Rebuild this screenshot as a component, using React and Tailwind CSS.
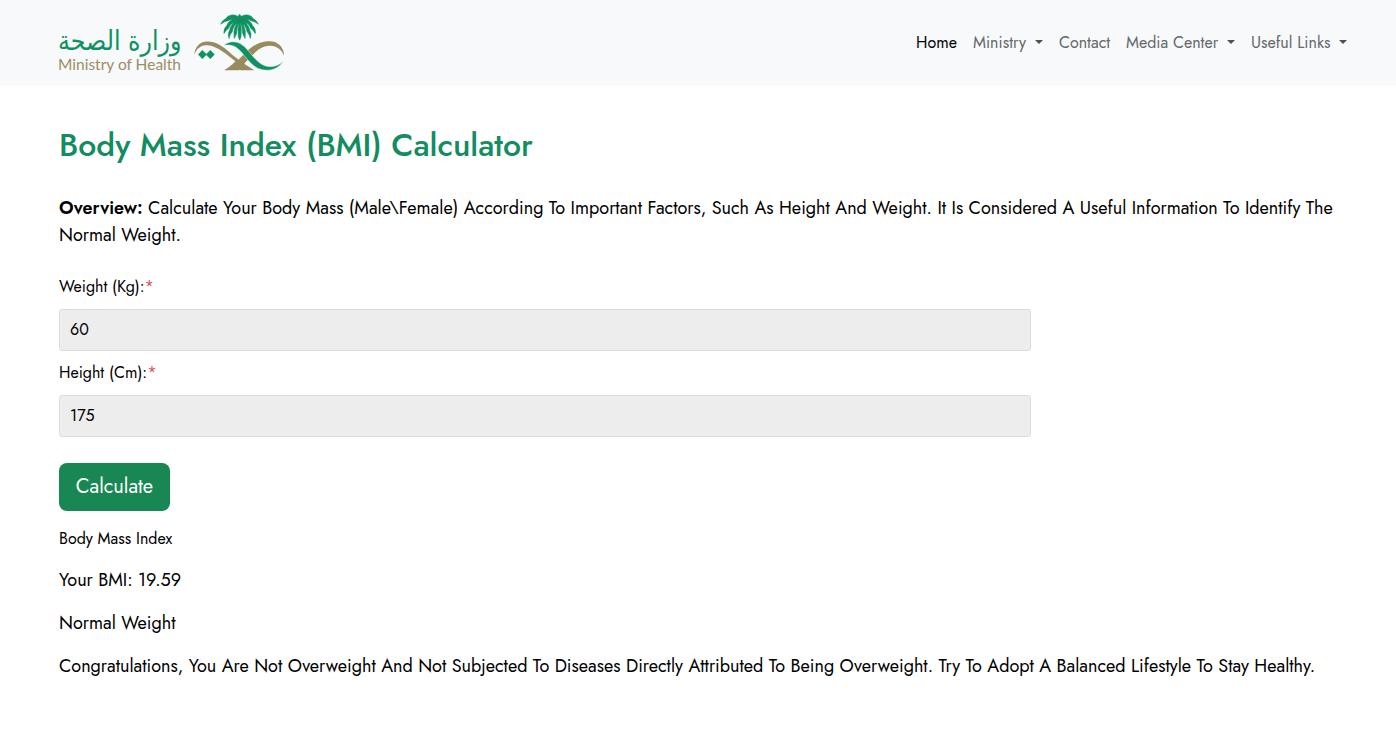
import React from "react";

function Logo() {
  return (
    <svg width="230" height="76" viewBox="58 5 230 76" role="img" aria-label="Ministry of Health">
      <text x="58" y="50" direction="ltr" textLength="123.5" lengthAdjust="spacingAndGlyphs" fontFamily="'DejaVu Sans', sans-serif" fontSize="27" fill="#0f9162">وزارة الصحة</text>
      <text x="58" y="69.5" textLength="123" lengthAdjust="spacingAndGlyphs" fontFamily="Lato, sans-serif" fontSize="15.8" fill="#9b8e62">Ministry of Health</text>
      <g transform="translate(185 5.5) scale(.33333)">
        <g fill="#988b60">
          <path d="M28 148C29 126 43 108 67 108C93 108 112 121 135 142C163 167 187 181 208 194H167L148 178L121 194H118C136 182 148 172 151 167C127 148 98 121 67 119C48 118 35 128 28 148Z" />
          <path d="M119 194C154 176 173 146 202 124C222 110 237 107 254 107C280 107 298 127 297 151C290 132 276 122 256 121C232 120 215 136 202 149C187 164 177 174 163 194Z" />
        </g>
        <path fill="#0f9162" stroke="#f8f9fa" strokeWidth="1.5" d="M117 120C130 107 150 105 169 116C190 129 203 159 230 176C251 189 278 184 295 167C281 190 255 199 229 192C194 183 180 145 155 127C144 119 132 117 117 120Z" />
        <path fill="#0f9162" stroke="#0f9162" strokeWidth="1.5" d="M40 147L52 134L64 146L76 134L88 147L76 160L64 148L52 160Z" />
        <g fill="#0f9162" stroke="#0f9162" strokeWidth="1.8" transform="translate(0 2)">
          <path d="M164 38L169 70L168 92L164 102L160 92L159 70Z" />
          <path d="M164 24L169 31C184 22 199 27 204 37Q215 42 220 54Q208 45 198 44C186 37 176 40 169 48H158C151 40 141 37 129 44Q119 45 107 54Q112 42 123 37C129 27 144 22 159 31Z" />
          <path d="M160 37C142 36 129 47 125 59Q115 67 117 82Q123 71 131 66C136 53 147 46 160 47Z" />
          <path d="M168 37C186 36 199 47 203 59Q213 67 211 82Q205 71 197 66C192 53 181 46 168 47Z" />
          <path d="M162 40C146 46 136 59 134 72Q127 83 132 97Q135 84 142 76C144 62 151 53 162 48Z" />
          <path d="M166 40C182 46 192 59 194 72Q201 83 196 97Q193 84 186 76C184 62 177 53 166 48Z" />
          <path d="M162 42C151 56 146 70 147 82L148 97L155 82C155 69 158 57 163 49Z" />
          <path d="M166 42C177 56 182 70 181 82L180 97L173 82C173 69 170 57 165 49Z" />
        </g>
      </g>
    </svg>
  );
}

function Caret() {
  return <span className="mt-[-2px] h-0 w-0 border-x-[4.5px] border-t-[4.5px] border-x-transparent border-t-[#4d5154]" />;
}

function NavItem({ label, className, dropdown }) {
  return (
    <a href="#" className={`flex items-center justify-between whitespace-nowrap text-[16px] leading-6 ${className}`}>
      <span>{label}</span>
      {dropdown && <Caret />}
    </a>
  );
}

function Field({ label, value }) {
  return (
    <div className="h-[86px]">
      <label className="block text-[16px] leading-6">
        {label}<span className="text-[#dc4c55]">*</span>
      </label>
      <input readOnly value={value} className="mt-[10px] block h-[42px] w-[972px] rounded-[3px] border border-[#dcdcdc] bg-[#ededed] px-[10px] pb-[2px] text-[16px] text-black outline-none" />
    </div>
  );
}

export default function App() {
  return (
    <div className="h-[731px] overflow-hidden bg-white font-[Jost,Lato,sans-serif] text-black">
      <header className="flex h-[86px] items-center justify-between bg-[#f8f9fa] pr-[49px] pl-[58px]">
        <Logo />
        <nav className="flex gap-4 text-[#64686b]">
          <NavItem label="Home" className="w-[41px] text-black" />
          <NavItem label="Ministry" className="w-[70px]" dropdown />
          <NavItem label="Contact" className="w-[51px]" />
          <NavItem label="Media Center" className="w-[109px]" dropdown />
          <NavItem label="Useful Links" className="w-[96px]" dropdown />
        </nav>
      </header>
      <main className="px-[59px] pt-[40px]">
        <h1 className="text-[32px] leading-[38px] font-medium whitespace-nowrap text-[#128c60]">Body Mass Index (BMI) Calculator</h1>
        <p className="mt-[31px] text-[18px] leading-[27px] whitespace-nowrap">
          <strong className="font-semibold">Overview:</strong> Calculate Your Body Mass (Male\Female) According To Important Factors, Such As Height And Weight. It Is Considered A Useful Information To Identify The<br />Normal Weight.
        </p>
        <form className="mt-[26px]">
          <Field label="Weight (Kg):" value="60" />
          <Field label="Height (Cm):" value="175" />
          <button type="button" className="mt-[16px] block h-[48px] w-[111px] rounded-[8px] bg-[#198754] text-[20px] whitespace-nowrap text-white">Calculate</button>
        </form>
        <section className="mt-[16px] whitespace-nowrap">
          <h2 className="text-[16px] leading-6">Body Mass Index</h2>
          <div className="mt-4 flex flex-col items-start gap-4 text-[18px] leading-[27px]">
            <p>Your BMI: 19.59</p>
            <p>Normal Weight</p>
            <p>Congratulations, You Are Not Overweight And Not Subjected To Diseases Directly Attributed To Being Overweight. Try To Adopt A Balanced Lifestyle To Stay Healthy.</p>
          </div>
        </section>
      </main>
    </div>
  );
}
